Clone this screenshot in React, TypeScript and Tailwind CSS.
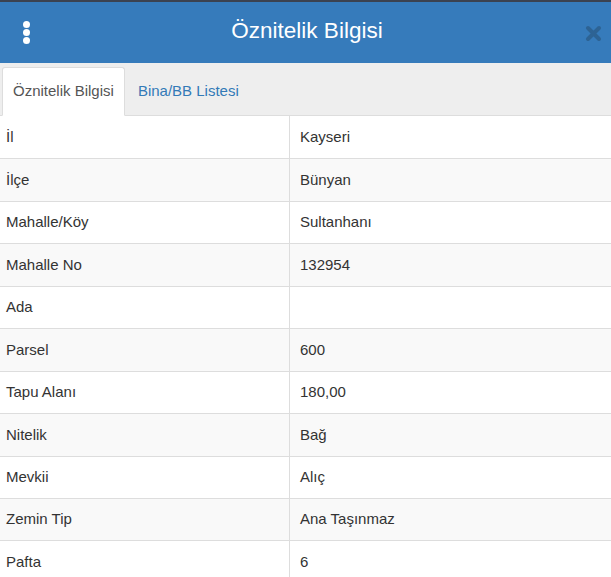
const rows: [string, string][] = [
  ["İl", "Kayseri"],
  ["İlçe", "Bünyan"],
  ["Mahalle/Köy", "Sultanhanı"],
  ["Mahalle No", "132954"],
  ["Ada", ""],
  ["Parsel", "600"],
  ["Tapu Alanı", "180,00"],
  ["Nitelik", "Bağ"],
  ["Mevkii", "Alıç"],
  ["Zemin Tip", "Ana Taşınmaz"],
  ["Pafta", "6"],
];

export default function App() {
  return (
    <div className="w-[611px] h-[577px] overflow-hidden bg-white font-['Liberation_Sans',Arial,sans-serif] text-[#333]">
      {/* page strip behind the dialog */}
      <div className="h-[2px] bg-[#3b4250]" />

      {/* Header */}
      <header className="relative h-[61px] bg-[#367bbb] flex items-center justify-center">
        <div className="absolute left-[23px] top-[19px] flex flex-col gap-[1.5px]">
          <span className="w-[6.5px] h-[6.5px] rounded-full bg-white" />
          <span className="w-[6.5px] h-[6.5px] rounded-full bg-white" />
          <span className="w-[6.5px] h-[6.5px] rounded-full bg-white" />
        </div>
        <h1 className="text-white text-[22.5px] leading-none -mt-[2px] ml-[3px]">Öznitelik Bilgisi</h1>
        <svg className="absolute left-[585px] top-[23px] w-[17px] h-[17px]" viewBox="0 0 17 17">
          <path d="M3 3 L14 14 M14 3 L3 14" stroke="#2d6394" strokeWidth={4} strokeLinecap="round" />
        </svg>
      </header>

      {/* Tabs */}
      <div className="h-[53px] bg-[#eeeeee] border-b border-[#dddddd] flex items-end pl-[2px]">
        <div className="h-[49px] -mb-px bg-white border border-[#dddddd] border-b-transparent rounded-t-[3px] px-[10px] flex items-center text-[15px] text-[#555]">
          Öznitelik Bilgisi
        </div>
        <div className="h-[48px] px-[13px] flex items-center text-[15px] text-[#337ab7]">
          Bina/BB Listesi
        </div>
      </div>

      {/* Table */}
      <div>
        {rows.map(([label, value], i) => (
          <div
            key={label}
            className={`flex h-[42.44px] text-[15px] ${i > 0 ? "border-t border-[#dddddd]" : ""} ${i % 2 === 1 ? "bg-[#f9f9f9]" : "bg-white"}`}
          >
            <div className="w-[290px] shrink-0 border-r border-[#dddddd] pl-[6px] flex items-center">{label}</div>
            <div className="flex-1 pl-[10px] flex items-center">{value}</div>
          </div>
        ))}
      </div>
    </div>
  );
}
